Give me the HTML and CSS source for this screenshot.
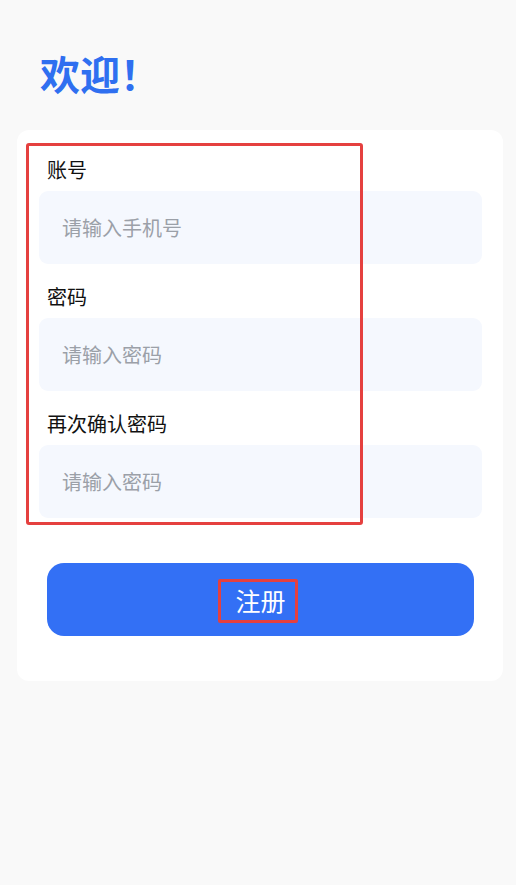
FILE: index.html
```html
<!DOCTYPE html>
<html lang="zh-CN">
<head>
<meta charset="utf-8">
<title>注册</title>
<link rel="stylesheet" href="styles.css">
</head>
<body>
<div class="page">
  <h1 class="title">欢迎！</h1>
  <div class="card">
    <div class="mark-box"></div>
    <div class="field">
      <div class="label">账号</div>
      <input class="input" type="text" placeholder="请输入手机号">
    </div>
    <div class="field">
      <div class="label">密码</div>
      <input class="input" type="password" placeholder="请输入密码">
    </div>
    <div class="field">
      <div class="label">再次确认密码</div>
      <input class="input" type="password" placeholder="请输入密码">
    </div>
    <button class="btn" type="button"><span class="btn-text">注册</span></button>
  </div>
</div>
</body>
</html>
```
FILE: styles.css
```css
*, *::before, *::after { box-sizing: border-box; }
html, body {
  margin: 0;
  padding: 0;
  background: #f9f9f9;
  font-family: "Noto Sans CJK SC", "Noto Sans", sans-serif;
}
.page {
  padding: 0 13px 0 17px;
}
.title {
  margin: 0;
  padding: 46px 0 0 23px;
  font-size: 40px;
  line-height: 54px;
  font-weight: 700;
  color: #2f6ff0;
}
.card {
  position: relative;
  margin-top: 30px;
  background: #ffffff;
  border-radius: 12px;
  padding: 26px 21px 45px 22px;
}
.mark-box {
  position: absolute;
  left: 9px;
  top: 13px;
  width: 337px;
  height: 382px;
  border: 3px solid #e5403f;
  border-radius: 3px;
  pointer-events: none;
}
.field {
  display: flex;
  flex-direction: column;
  margin-bottom: 19px;
}
.field:last-of-type { margin-bottom: 0; }
.label {
  padding-left: 8px;
  font-size: 20px;
  line-height: 28px;
  color: #111;
  margin-bottom: 7px;
}
.input {
  display: block;
  width: 100%;
  height: 73px;
  border: none;
  outline: none;
  border-radius: 9px;
  background: #f5f8fe;
  padding: 0 0 0 23px;
  font-family: inherit;
  font-size: 20px;
  color: #333;
}
.input::placeholder { color: #9ba0a8; }
.btn {
  display: flex;
  align-items: center;
  justify-content: center;
  width: calc(100% - 16px);
  height: 73px;
  margin: 45px 8px 0 8px;
  border: none;
  border-radius: 17px;
  background: #3370f5;
  color: #fff;
  font-family: inherit;
  font-size: 25px;
  line-height: 34px;
  padding: 0;
}
.btn-text {
  position: relative;
}
.btn-text::after {
  content: "";
  position: absolute;
  left: -17px;
  top: -4px;
  width: 80px;
  height: 44px;
  border: 3px solid #e5403f;
  border-radius: 2px;
}
```
